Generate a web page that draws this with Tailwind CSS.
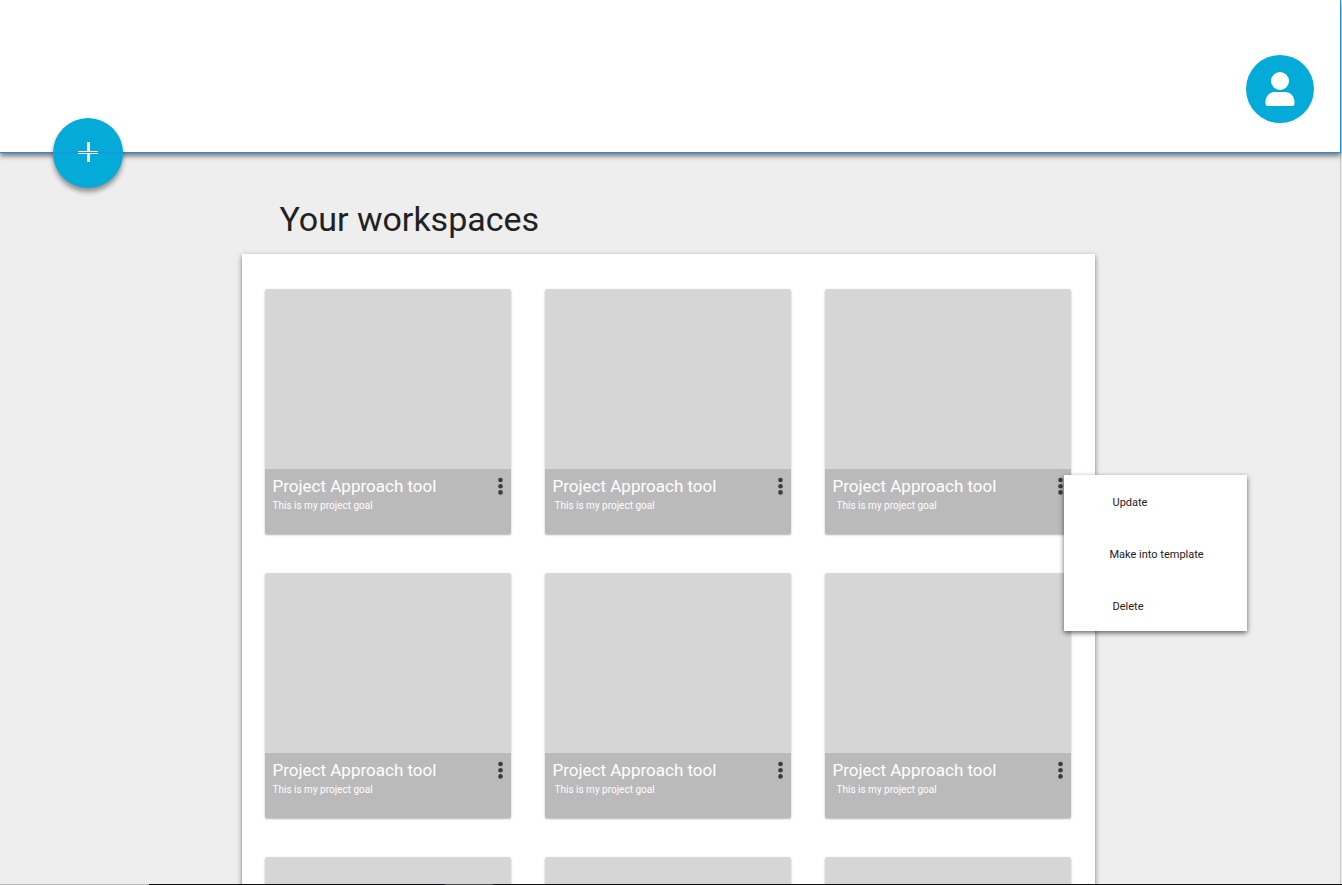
<!DOCTYPE html>
<html lang="en">
<head>
<meta charset="utf-8">
<meta name="viewport" content="width=device-width, initial-scale=1">
<title>Your workspaces</title>
<script src="https://cdn.jsdelivr.net/npm/@tailwindcss/browser@4"></script>
</head>
<body class="flex h-screen flex-col overflow-hidden bg-[#eeeeee] font-['Roboto',sans-serif] text-[#212121]">
<div class="mr-px flex min-h-0 flex-1 flex-col border-r border-[#c8c8c8]">
  <header class="relative z-10 -mr-px flex h-[153px] shrink-0 items-center justify-end border-r border-b border-[#1e90e6] bg-white pt-[26px] pr-[26px] shadow-[0_3px_5px_rgba(0,0,0,0.5)]">
    <button type="button" aria-label="Account" class="size-[68px] rounded-full bg-[#04abd9]">
      <svg viewBox="0 0 68 68" class="size-full" fill="#fff" aria-hidden="true">
        <circle cx="34" cy="26" r="9"/>
        <path d="M19.500 47C19.500 41 24 37 29 37H39C44 37 48.500 41 48.500 47V48.500Q48.500 51 46 51H22Q19.500 51 19.500 48.500Z"/>
      </svg>
    </button>
    <button type="button" aria-label="Add workspace" class="absolute -bottom-9 left-[53px] size-[70px] rounded-full bg-[#04abd9] shadow-[0_4px_5px_rgba(0,0,0,0.4)]">
      <svg viewBox="0 0 70 70" class="size-full" shape-rendering="crispEdges" aria-hidden="true">
        <path d="M34 24h3v20h-3zM25 33h20v3H25z" fill="#fff"/>
        <path d="M0 34h70v1H0z" fill="#1e90e6"/>
      </svg>
    </button>
  </header>

  <main class="flex min-h-0 flex-1 justify-center overflow-hidden pr-1">
    <div class="w-[853px]">
      <h1 class="pt-[46px] pb-[15px] pl-[38px] text-[34px] leading-10">Your workspaces</h1>
      <section aria-label="Workspaces" class="grid grid-cols-3 gap-x-[34px] gap-y-[39px] bg-white pt-[35px] pr-6 pb-9 pl-[23px] shadow-[0_2px_5px_rgba(0,0,0,0.5)]" id="grid"></section>
    </div>
  </main>
</div>
<footer class="flex h-px shrink-0 bg-[#0b0d12]">
  <span class="w-[149px] bg-[#b8b8b8]"></span>
  <span class="ml-[296px] w-12 bg-[#4a4a4a]"></span>
</footer>

<template id="card">
  <article class="relative rounded-xs bg-[#d6d6d6] shadow-[0_1px_2px_rgba(0,0,0,0.3)]">
    <div class="h-[180px]"></div>
    <div class="caption flex h-[65px] justify-between rounded-b-xs bg-[#bababa] pt-[7px] pr-1 pl-2 text-white">
      <div>
        <h2 class="text-[17px] leading-5">Project Approach tool</h2>
        <p class="text-[10px] leading-5">This is my project goal</p>
      </div>
      <button type="button" aria-label="Workspace options" class="h-5 w-3">
        <svg viewBox="0 0 12 20" class="h-5 w-3" fill="#3c3c3c" aria-hidden="true">
          <circle cx="5.500" cy="4" r="2.300"/><circle cx="5.500" cy="10.200" r="2.300"/><circle cx="5.500" cy="16.400" r="2.300"/>
        </svg>
      </button>
    </div>
  </article>
</template>

<template id="menu">
  <div role="menu" class="absolute top-[186px] left-[239px] z-20 flex w-[183px] flex-col gap-9 bg-white pt-5 pb-4 text-[11px] leading-4 shadow-[0_2px_5px_rgba(0,0,0,0.6)]">
    <button type="button" role="menuitem" class="pl-[49px] text-left">Update</button>
    <button type="button" role="menuitem" class="pl-[46px] text-left">Make into template</button>
    <button type="button" role="menuitem" class="pl-[49px] text-left">Delete</button>
  </div>
</template>

<script>
const grid = document.getElementById('grid');
for (let i = 0; i < 9; i++) {
  const card = document.getElementById('card').content.cloneNode(true);
  if (i % 3 === 1) card.querySelector('p').classList.add('pl-0.5');
  if (i % 3 === 2) card.querySelector('p').classList.add('pl-1');
  if (i > 5) card.querySelector('.caption').remove();
  if (i === 2) {
    const article = card.querySelector('article');
    article.classList.add('z-20', 'text-[#212121]');
    article.append(document.getElementById('menu').content.cloneNode(true));
  }
  grid.append(card);
}
</script>
</body>
</html>
